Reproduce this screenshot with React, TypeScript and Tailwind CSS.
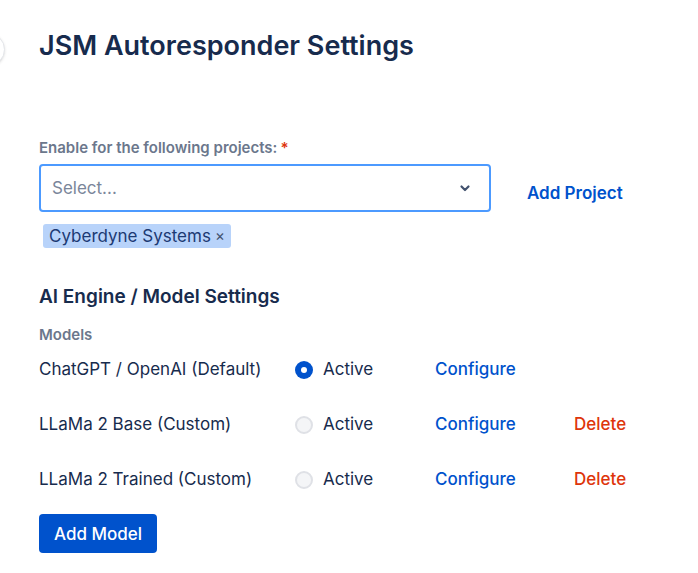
interface ModelRow {
  name: string;
  active: boolean;
  deletable: boolean;
}

const models: ModelRow[] = [
  { name: 'ChatGPT / OpenAI (Default)', active: true, deletable: false },
  { name: 'LLaMa 2 Base (Custom)', active: false, deletable: true },
  { name: 'LLaMa 2 Trained (Custom)', active: false, deletable: true },
];

export default function App() {
  return (
    <div
      className="relative min-h-screen bg-white pl-[39px] pt-[30px] text-[#172B4D] overflow-hidden"
      style={{ fontFamily: 'Inter, "Liberation Sans", sans-serif' }}
    >
      {/* sidebar collapse button peeking in */}
      <div className="absolute left-[-28px] top-[33px] w-[33px] h-[33px] rounded-full border border-[#e4e6ea] bg-white shadow-sm" />

      <h1 className="text-[27px] leading-8 font-semibold">
        JSM Autoresponder Settings
      </h1>

      {/* Projects */}
      <label className="block mt-[76px] text-[15px] leading-5 font-semibold text-[#6B778C]">
        Enable for the following projects:
        <span className="text-[#DE350B] ml-[3px]">*</span>
      </label>
      <div className="flex items-center mt-[6px]">
        <div className="w-[452px] h-[48px] border-2 border-[#4C9AFF] rounded-[4px] flex items-center justify-between pl-[11px] pr-[18px]">
          <span className="text-[17px] pt-[1px] text-[#7A869A]">Select...</span>
          <svg className="w-[12px] h-[12px] text-[#42526E]" viewBox="0 0 12 12" fill="none">
            <path
              d="M2.5 4.5L6 8l3.5-3.5"
              stroke="currentColor"
              strokeWidth={2.2}
              strokeLinecap="round"
              strokeLinejoin="round"
            />
          </svg>
        </div>
        <button className="ml-[36px] mt-[11px] text-[17px] font-semibold text-[#0052CC]">
          Add Project
        </button>
      </div>
      <div className="mt-[12px] ml-[4px] inline-flex items-center h-[24px] pt-[1px] px-[6px] rounded-[3px] bg-[#B8D3FA] text-[17px] text-[#1c3a73]">
        Cyberdyne Systems
        <span className="ml-[4px] text-[15px] text-[#42526E]">×</span>
      </div>

      {/* AI Engine */}
      <h2 className="mt-[37px] text-[19px] leading-6 font-semibold">
        AI Engine / Model Settings
      </h2>
      <div className="mt-[16px] text-[15px] leading-5 font-semibold text-[#6B778C]">
        Models
      </div>

      <div className="mt-[13px] flex flex-col gap-[31px]">
        {models.map((m) => (
          <div key={m.name} className="flex items-center h-[24px] text-[17px]">
            <span className="w-[256px]">{m.name}</span>
            <div className="w-[140px] flex items-center">
              {m.active ? (
                <span className="w-[18px] h-[18px] rounded-full bg-[#0052CC] flex items-center justify-center">
                  <span className="w-[6px] h-[6px] rounded-full bg-white" />
                </span>
              ) : (
                <span className="w-[18px] h-[18px] rounded-full bg-[#F4F5F7] border-2 border-[#DFE1E6]" />
              )}
              <span className="ml-[10px]">Active</span>
            </div>
            <button className="w-[139px] text-left font-medium text-[#0052CC]">
              Configure
            </button>
            {m.deletable && (
              <button className="text-left font-medium text-[#DE350B]">Delete</button>
            )}
          </div>
        ))}
      </div>

      <button className="mt-[22px] h-[39px] w-[118px] pt-[2px] rounded-[4px] bg-[#0052CC] text-white text-[17px] font-medium">
        Add Model
      </button>
    </div>
  );
}
